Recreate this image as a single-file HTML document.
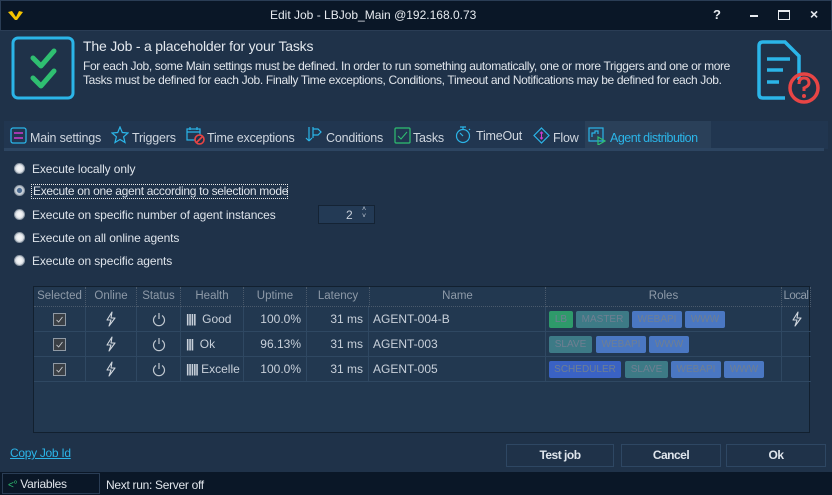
<!DOCTYPE html>
<html><head><meta charset="utf-8"><style>
*{box-sizing:border-box;margin:0;padding:0}
body{width:832px;height:495px;background:#1f3249;font-family:"Liberation Sans",sans-serif;font-size:12px;color:#d6dde6;position:relative;overflow:hidden}
.a{position:absolute}
.title{left:0;top:0;width:832px;height:31px;background:#0a1727;border:1px solid #2a3d55}
.tabs{left:4px;top:121px;width:824px;height:28px;background:#213650}
.tabline{left:4px;top:148px;width:820px;height:3px;background:#2d4561}
.tab{top:131px;font-size:12.5px;color:#cfd6df;letter-spacing:-0.2px}
.radio{width:11px;height:11px;border-radius:50%;background:radial-gradient(#f2f4f6 30%,#b8c1cb 100%);border:1px solid #8f9aa6}
.rl{font-size:12px;color:#dde3ea;letter-spacing:-0.1px}
.grid{left:33px;top:286px;width:777px;height:147px;background:#223850;border:1px solid #12202f}
.hd{top:0;height:20px;line-height:19px;color:#8e9aa8;text-align:center;font-size:11.5px;border-right:1px dotted #4a5a6c;border-bottom:1px dotted #4a5a6c;white-space:nowrap;overflow:hidden}
.row{left:0;width:777px;height:25px;border-bottom:1px solid #2f4862}
.c{top:0;height:24px;line-height:24px;border-right:1px solid #2f4862;font-size:12px;color:#c8d0da}
.cb{width:13px;height:13px;border:1px solid #909aa5;background:#3a3f45;left:19px;top:6px}
.tag{top:4px;height:17px;line-height:17px;font-size:10px;color:#6f7f92;text-align:center;border-radius:2px}
.btn{top:444px;height:23px;border:1px solid #2e4763;background:#1f3249;text-align:center;line-height:21px;font-weight:bold;font-size:12px;color:#dfe5ec;letter-spacing:-0.5px}
.ic{position:absolute;left:50%;top:4px;margin-left:-8px}
</style></head><body>
<div class="a title"></div>
<svg class="a" style="left:7px;top:9px" width="18" height="12"><path d="M1 3 L5 2 L9 8 L12 2 L16 3 L10 11 L8 11 Z" fill="#f5c400"/></svg>
<div class="a" style="left:270px;top:8px;font-size:12px;color:#e6eaef">Edit Job - LBJob_Main @192.168.0.73</div>
<div class="a" style="left:713px;top:7px;font-size:13px;font-weight:bold;color:#e6eaef">?</div>
<div class="a" style="left:750px;top:15px;width:8px;height:2px;background:#e6eaef"></div>
<div class="a" style="left:778px;top:10px;width:12px;height:10px;border:1px solid #e6eaef;border-top-width:2px"></div>
<div class="a" style="left:810px;top:6px;font-size:14px;font-weight:bold;color:#e6eaef">×</div>

<svg class="a" style="left:11px;top:36px" width="64" height="64"><rect x="2" y="2" width="60" height="60" rx="5" fill="none" stroke="#2bb5e8" stroke-width="3"/><path d="M22 22 L30 30 L43 15 M22 42 L30 50 L43 35" fill="none" stroke="#2fbf71" stroke-width="5" stroke-linecap="round" stroke-linejoin="round"/></svg>
<div class="a" style="left:83px;top:38px;font-size:14px;color:#e3e8ee;letter-spacing:-0.2px">The Job - a placeholder for your Tasks</div>
<div class="a" style="left:83px;top:59px;font-size:12px;color:#dfe4ea;line-height:14px;width:660px;letter-spacing:-0.35px;white-space:nowrap">For each Job, some Main settings must be defined. In order to run something automatically, one or more Triggers and one or more<br>Tasks must be defined for each Job. Finally Time exceptions, Conditions, Timeout and Notifications may be defined for each Job.</div>
<svg class="a" style="left:755px;top:40px" width="70" height="66"><path d="M4 6 Q4 2 8 2 L30 2 L44 16 L44 40 M4 6 L4 54 Q4 58 8 58 L30 58" fill="none" stroke="#2bb5e8" stroke-width="3.5"/><path d="M12 19 H35 M12 30 H28 M12 42 H24" stroke="#2bb5e8" stroke-width="3.5"/><circle cx="49" cy="48" r="14" fill="none" stroke="#e84545" stroke-width="3.5"/><path d="M44 44 Q44 38 49 38 Q54 38 54 43 Q54 46 49 48 V51" fill="none" stroke="#e84545" stroke-width="3"/><circle cx="49" cy="56" r="2" fill="#e84545"/></svg>

<div class="a tabs"></div>
<div class="a" style="left:585px;top:121px;width:126px;height:28px;background:#2a4059"></div>
<div class="a tabline"></div>
<svg class="a" style="left:10px;top:127px" width="18" height="18"><rect x="1" y="1" width="15" height="15" rx="2" fill="none" stroke="#2bb5e8" stroke-width="1.3"/><path d="M4 6 H13 M4 11 H13" stroke="#d03ad0" stroke-width="1.5"/></svg>
<div class="a tab" style="left:30px">Main settings</div>
<svg class="a" style="left:111px;top:126px" width="18" height="18"><path d="M9 1 L11.3 6.5 L17 7 L12.6 10.8 L14 16.5 L9 13.5 L4 16.5 L5.4 10.8 L1 7 L6.7 6.5 Z" fill="none" stroke="#2bb5e8" stroke-width="1.2"/></svg>
<div class="a tab" style="left:132px">Triggers</div>
<svg class="a" style="left:186px;top:126px" width="20" height="20"><rect x="1" y="3" width="13" height="11" fill="none" stroke="#2bb5e8" stroke-width="1.2"/><path d="M1 6 H14 M4 1 V4 M11 1 V4" stroke="#2bb5e8" stroke-width="1.2"/><circle cx="13.5" cy="13.5" r="4.5" fill="#1f3249" stroke="#e84545" stroke-width="1.6"/><path d="M10.5 16.5 L16.5 10.5" stroke="#e84545" stroke-width="1.6"/></svg>
<div class="a tab" style="left:207px">Time exceptions</div>
<svg class="a" style="left:305px;top:126px" width="18" height="18"><path d="M4 1 V15 M4 15 L1 12 M4 15 L7 12 M8 1 V12 M8 3 H13 L16 6 L13 9 H8" fill="none" stroke="#2bb5e8" stroke-width="1.2"/></svg>
<div class="a tab" style="left:326px">Conditions</div>
<svg class="a" style="left:394px;top:127px" width="17" height="17"><rect x="1" y="1" width="15" height="15" rx="1" fill="none" stroke="#2fbf71" stroke-width="1.2"/><path d="M4 9 L7 12 L13 5" fill="none" stroke="#2fbf71" stroke-width="1"/></svg>
<div class="a tab" style="left:413px">Tasks</div>
<svg class="a" style="left:455px;top:125px" width="17" height="20"><circle cx="8" cy="11" r="6.5" fill="none" stroke="#2bb5e8" stroke-width="1.2"/><path d="M5 2 H11 M8 2 V4 M8 11 L5 8 M14 4 L15 5" stroke="#2bb5e8" stroke-width="1.2"/></svg>
<div class="a tab" style="left:476px;top:129px">TimeOut</div>
<svg class="a" style="left:533px;top:127px" width="17" height="17"><path d="M8.5 1 L16 8.5 L8.5 16 L1 8.5 Z" fill="none" stroke="#2bb5e8" stroke-width="1.2"/><path d="M8.5 5 V12 M7 6.5 L8.5 5 L10 6.5 M7 10.5 L8.5 12 L10 10.5" fill="none" stroke="#d03ad0" stroke-width="1"/></svg>
<div class="a tab" style="left:553px">Flow</div>
<svg class="a" style="left:588px;top:127px" width="18" height="18"><rect x="1" y="1" width="14" height="13" fill="none" stroke="#2bb5e8" stroke-width="1.2"/><path d="M4 10 V6 H7 V4 H10 V7" fill="none" stroke="#2bb5e8" stroke-width="1.2"/><path d="M10 10 L17 14 L10 18 Z" fill="none" stroke="#2fbf71" stroke-width="1.2"/></svg>
<div class="a tab" style="left:610px;color:#2bb5e8;letter-spacing:-0.5px">Agent distribution</div>

<div class="a radio" style="left:14px;top:163px"></div><div class="a rl" style="left:32px;top:162px">Execute locally only</div>
<div class="a radio" style="left:14px;top:185px;background:radial-gradient(#4b6a90 35%,#c8d0d8 45%,#b8c1cb 100%)"></div><div class="a rl" style="left:31px;top:184px;border:1px dotted #e8e8e8;padding:0 1px;height:15px;line-height:13px;width:257px;white-space:nowrap;letter-spacing:-0.3px">Execute on one agent according to selection mode</div>
<div class="a radio" style="left:14px;top:209px"></div><div class="a rl" style="left:32px;top:208px">Execute on specific number of agent instances</div>
<div class="a" style="left:318px;top:205px;width:57px;height:19px;background:#233a55;border:1px solid #142334;color:#c8d0da;font-size:12px"><span style="position:absolute;left:27px;top:2px">2</span><span style="position:absolute;left:43px;top:0;font-size:7px;line-height:7px">˄<br>˅</span></div>
<div class="a radio" style="left:14px;top:232px"></div><div class="a rl" style="left:32px;top:231px">Execute on all online agents</div>
<div class="a radio" style="left:14px;top:255px"></div><div class="a rl" style="left:32px;top:254px">Execute on specific agents</div>

<svg width="0" height="0" style="position:absolute"><defs>
<symbol id="bolt" viewBox="0 0 16 16"><path d="M9 1 L4 9 H8 L6 15 L12 7 H8 Z" fill="none" stroke="#d0d6dd" stroke-width="1.1" stroke-linejoin="round"/></symbol>
<symbol id="pw" viewBox="0 0 16 16"><path d="M5 4.5 A5.5 5.5 0 1 0 11 4.5" fill="none" stroke="#c0c8d0" stroke-width="1.2"/><path d="M8 2 V8" stroke="#c0c8d0" stroke-width="1.2"/></symbol>
<symbol id="ck" viewBox="0 0 13 13"><path d="M3 7 L5.5 9.5 L10 3.5" fill="none" stroke="#c8ccd0" stroke-width="1"/></symbol>
</defs></svg>

<div class="a grid">
<div class="a hd" style="left:0;width:52px">Selected</div>
<div class="a hd" style="left:52px;width:51px">Online</div>
<div class="a hd" style="left:103px;width:44px">Status</div>
<div class="a hd" style="left:147px;width:63px">Health</div>
<div class="a hd" style="left:210px;width:63px">Uptime</div>
<div class="a hd" style="left:273px;width:62px;border-right:none">Latency</div>
<div class="a hd" style="left:335px;width:177px;border-right:1px dotted #4a5a6c;border-left:1px dotted #4a5a6c">Name</div>
<div class="a hd" style="left:512px;width:236px">Roles</div>
<div class="a hd" style="left:748px;width:29px;letter-spacing:-0.5px">Local</div>

<div class="a row" style="top:20px">
<div class="a c" style="left:0;width:52px"><svg class="a cb"><use href="#ck"/></svg></div>
<div class="a c" style="left:52px;width:51px"><svg class="ic" width="16" height="16"><use href="#bolt"/></svg></div>
<div class="a c" style="left:103px;width:44px"><svg class="ic" width="16" height="16"><use href="#pw"/></svg></div>
<div class="a c" style="left:147px;width:63px;padding-left:5px"><b style="letter-spacing:-1px">||||</b>&nbsp;&nbsp;Good</div>
<div class="a c" style="left:210px;width:63px;text-align:right;padding-right:5px">100.0%</div>
<div class="a c" style="left:273px;width:62px;text-align:right;padding-right:5px">31 ms</div>
<div class="a c" style="left:335px;width:177px;padding-left:4px">AGENT-004-B</div>
<div class="a c" style="left:512px;width:236px">
<div class="a tag" style="left:3px;width:24px;background:#2e9a6a">LB</div>
<div class="a tag" style="left:30px;width:53px;background:#3d7a86">MASTER</div>
<div class="a tag" style="left:86px;width:50px;background:#4a77c2">WEBAPI</div>
<div class="a tag" style="left:139px;width:40px;background:#4a77c2">WWW</div></div>
<div class="a c" style="left:748px;width:29px;border-right:none"><svg class="ic" width="16" height="16"><use href="#bolt"/></svg></div>
</div>
<div class="a row" style="top:45px">
<div class="a c" style="left:0;width:52px"><svg class="a cb"><use href="#ck"/></svg></div>
<div class="a c" style="left:52px;width:51px"><svg class="ic" width="16" height="16"><use href="#bolt"/></svg></div>
<div class="a c" style="left:103px;width:44px"><svg class="ic" width="16" height="16"><use href="#pw"/></svg></div>
<div class="a c" style="left:147px;width:63px;padding-left:5px"><b style="letter-spacing:-1px">|||</b>&nbsp;&nbsp;Ok</div>
<div class="a c" style="left:210px;width:63px;text-align:right;padding-right:5px">96.13%</div>
<div class="a c" style="left:273px;width:62px;text-align:right;padding-right:5px">31 ms</div>
<div class="a c" style="left:335px;width:177px;padding-left:4px">AGENT-003</div>
<div class="a c" style="left:512px;width:236px">
<div class="a tag" style="left:3px;width:43px;background:#3d7a86">SLAVE</div>
<div class="a tag" style="left:50px;width:50px;background:#4a77c2">WEBAPI</div>
<div class="a tag" style="left:103px;width:40px;background:#4a77c2">WWW</div></div>
<div class="a c" style="left:748px;width:29px;border-right:none"></div>
</div>
<div class="a row" style="top:70px">
<div class="a c" style="left:0;width:52px"><svg class="a cb"><use href="#ck"/></svg></div>
<div class="a c" style="left:52px;width:51px"><svg class="ic" width="16" height="16"><use href="#bolt"/></svg></div>
<div class="a c" style="left:103px;width:44px"><svg class="ic" width="16" height="16"><use href="#pw"/></svg></div>
<div class="a c" style="left:147px;width:63px;padding-left:5px;white-space:nowrap;overflow:hidden"><b style="letter-spacing:-1px">|||||</b>&nbsp;Excelle</div>
<div class="a c" style="left:210px;width:63px;text-align:right;padding-right:5px">100.0%</div>
<div class="a c" style="left:273px;width:62px;text-align:right;padding-right:5px">31 ms</div>
<div class="a c" style="left:335px;width:177px;padding-left:4px">AGENT-005</div>
<div class="a c" style="left:512px;width:236px">
<div class="a tag" style="left:3px;width:72px;background:#3a62c4">SCHEDULER</div>
<div class="a tag" style="left:79px;width:43px;background:#3d7a86">SLAVE</div>
<div class="a tag" style="left:125px;width:50px;background:#4a77c2">WEBAPI</div>
<div class="a tag" style="left:178px;width:40px;background:#4a77c2">WWW</div></div>
<div class="a c" style="left:748px;width:29px;border-right:none"></div>
</div>
</div>

<div class="a" style="left:10px;top:446px;font-size:12px;color:#2bb5e8;text-decoration:underline;letter-spacing:-0.3px">Copy Job Id</div>
<div class="a btn" style="left:506px;width:108px">Test job</div>
<div class="a btn" style="left:621px;width:100px">Cancel</div>
<div class="a btn" style="left:726px;width:100px">Ok</div>

<div class="a" style="left:0;top:472px;width:832px;height:23px;background:#0a1727"></div>
<div class="a" style="left:2px;top:473px;width:98px;height:21px;border:1px solid #2a3d55;font-size:12px;color:#dfe4ea;padding:3px 0 0 5px;letter-spacing:-0.3px"><span style="color:#2fbf71;font-size:10px">&lt;°</span> Variables</div>
<div class="a" style="left:106px;top:478px;font-size:12px;color:#dfe4ea;letter-spacing:-0.3px">Next run: Server off</div>
</body></html>
